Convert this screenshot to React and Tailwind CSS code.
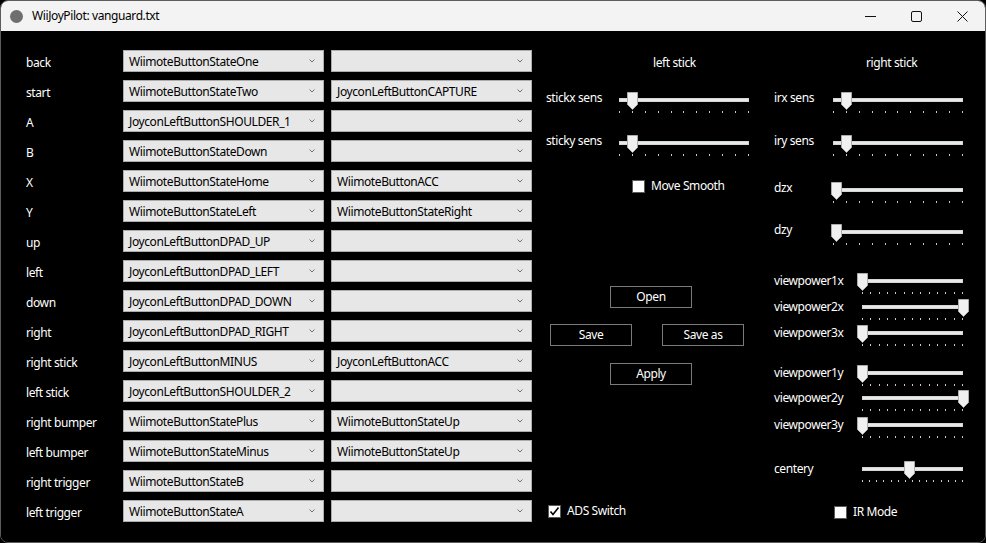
import React from 'react'

const FONT = "font-['Noto_Sans',sans-serif] tracking-[-0.4px]"

const mappings = [
  ['back', 'WiimoteButtonStateOne', ''],
  ['start', 'WiimoteButtonStateTwo', 'JoyconLeftButtonCAPTURE'],
  ['A', 'JoyconLeftButtonSHOULDER_1', ''],
  ['B', 'WiimoteButtonStateDown', ''],
  ['X', 'WiimoteButtonStateHome', 'WiimoteButtonACC'],
  ['Y', 'WiimoteButtonStateLeft', 'WiimoteButtonStateRight'],
  ['up', 'JoyconLeftButtonDPAD_UP', ''],
  ['left', 'JoyconLeftButtonDPAD_LEFT', ''],
  ['down', 'JoyconLeftButtonDPAD_DOWN', ''],
  ['right', 'JoyconLeftButtonDPAD_RIGHT', ''],
  ['right stick', 'JoyconLeftButtonMINUS', 'JoyconLeftButtonACC'],
  ['left stick', 'JoyconLeftButtonSHOULDER_2', ''],
  ['right bumper', 'WiimoteButtonStatePlus', 'WiimoteButtonStateUp'],
  ['left bumper', 'WiimoteButtonStateMinus', 'WiimoteButtonStateUp'],
  ['right trigger', 'WiimoteButtonStateB', ''],
  ['left trigger', 'WiimoteButtonStateA', ''],
]

function Combo({ value }) {
  return (
    <div className="h-[22px] w-[201px] border border-[#acacac] bg-[#e7e7e7] flex items-center pl-[5px] pr-[8px]">
      <span className="flex-1 text-[12px] text-black leading-none whitespace-nowrap pt-[1px]">{value}</span>
      <svg width="6" height="4" viewBox="0 0 6 4" className="shrink-0">
        <path d="M0.5 0.5 L3 3 L5.5 0.5" fill="none" stroke="#707070" strokeWidth="1" />
      </svg>
    </div>
  )
}

function Slider({ width, value, ticks }) {
  return (
    <div className="relative h-[24px]" style={{ width }}>
      <div className="absolute left-0 right-0 top-[8px] h-[4px] bg-[#e7eaea] border border-[#d6d6d6]" />
      <svg
        className="absolute top-[2px]"
        style={{ left: value * width - 5.5 }}
        width="11"
        height="18"
        viewBox="0 0 11 18"
      >
        <path d="M0.5 0.5 H10.5 V12.5 L5.5 17.5 L0.5 12.5 Z" fill="#f0f0f0" stroke="#acacac" />
      </svg>
      <div className="absolute left-0 right-0 top-[21px] flex justify-between">
        {Array.from({ length: ticks }).map((_, i) => (
          <div key={i} className="w-px h-[2px] bg-[#c8c8c8]" />
        ))}
      </div>
    </div>
  )
}

function SliderRow({ label, labelWidth, width, value, ticks, mt, labelTop = 0 }) {
  return (
    <div className="flex items-start" style={{ marginTop: mt }}>
      <div className="text-[12px] leading-4 text-white" style={{ width: labelWidth, paddingTop: labelTop }}>
        {label}
      </div>
      <Slider width={width} value={value} ticks={ticks} />
    </div>
  )
}

function CheckBox({ label, checked, className = '' }) {
  return (
    <div className={`flex items-center gap-[6px] h-4 ${className}`}>
      <div className="w-[13px] h-[13px] bg-white border border-[#5a5a5a] flex items-center justify-center">
        {checked && (
          <svg width="11" height="11" viewBox="0 0 11 11">
            <path d="M1.5 5.5 L4 8.5 L9.5 1.5" fill="none" stroke="#000" strokeWidth="1.6" />
          </svg>
        )}
      </div>
      <span className="text-[12px] text-white leading-4">{label}</span>
    </div>
  )
}

function Button({ children }) {
  return (
    <div className="w-[82px] h-[22px] border border-[#7a7a7a] bg-black text-white text-[12px] flex items-center justify-center">
      {children}
    </div>
  )
}

export default function App() {
  return (
    <div className={`w-[986px] h-[543px] bg-black ${FONT}`}>
      <div className="h-full flex flex-col border border-[#5c5c5c] rounded-[8px] overflow-hidden">
        {/* Title bar */}
        <div className="h-[30px] bg-[#f3f3f3] flex items-center shrink-0">
          <div className="ml-[9px] w-[13px] h-[13px] rounded-full bg-[#6e6e6e]" />
          <span className="ml-[9px] text-[12px] text-black">WiiJoyPilot: vanguard.txt</span>
          <div className="ml-auto flex items-center">
            <div className="w-[46px] h-[30px] flex items-center justify-center">
              <svg width="11" height="11" viewBox="0 0 11 11">
                <path d="M0 5.5 H11" stroke="#111" strokeWidth="1" />
              </svg>
            </div>
            <div className="w-[46px] h-[30px] flex items-center justify-center">
              <svg width="11" height="11" viewBox="0 0 11 11">
                <rect x="0.5" y="0.5" width="10" height="10" rx="1.5" fill="none" stroke="#111" strokeWidth="1" />
              </svg>
            </div>
            <div className="w-[46px] h-[30px] flex items-center justify-center">
              <svg width="11" height="11" viewBox="0 0 11 11">
                <path d="M0.5 0.5 L10.5 10.5 M10.5 0.5 L0.5 10.5" stroke="#111" strokeWidth="1" />
              </svg>
            </div>
          </div>
        </div>

        {/* Content */}
        <div className="flex-1 bg-black flex">
          {/* Button mapping */}
          <div className="w-[531px] pl-[25px] pt-[19px] flex flex-col gap-[8px]">
            {mappings.map(([label, a, b]) => (
              <div key={label} className="flex items-center h-[22px]">
                <div className="w-[97px] text-[12px] text-white pt-[4px]">{label}</div>
                <Combo value={a} />
                <div className="w-[7px]" />
                <Combo value={b} />
              </div>
            ))}
          </div>

          {/* Left stick */}
          <div className="w-[228px] pt-[24px] flex flex-col">
            <div className="pl-[121px] text-[12px] leading-4 text-white">left stick</div>
            <div className="pl-[14px]">
              <SliderRow label="stickx sens" labelWidth={73} width={130} value={0.1} ticks={11} mt={19} />
              <SliderRow label="sticky sens" labelWidth={73} width={130} value={0.1} ticks={11} mt={19} />
            </div>
            <CheckBox label="Move Smooth" checked={false} className="ml-[100px] mt-[21px]" />
            <div className="ml-[78px] mt-[92px]">
              <Button>Open</Button>
            </div>
            <div className="ml-[18px] mt-[16px] flex gap-[30px]">
              <Button>Save</Button>
              <Button>Save as</Button>
            </div>
            <div className="ml-[78px] mt-[17px]">
              <Button>Apply</Button>
            </div>
            <CheckBox label="ADS Switch" checked className="ml-[16px] mt-[118px]" />
          </div>

          {/* Right stick */}
          <div className="flex-1 pt-[24px] flex flex-col pl-[14px]">
            <div className="pl-[92px] text-[12px] leading-4 text-white">right stick</div>
            <SliderRow label="irx sens" labelWidth={59} width={130} value={0.1} ticks={11} mt={19} />
            <SliderRow label="iry sens" labelWidth={59} width={130} value={0.1} ticks={11} mt={19} />
            <SliderRow label="dzx" labelWidth={59} width={130} value={0.03} ticks={11} mt={23} />
            <SliderRow label="dzy" labelWidth={59} width={130} value={0.03} ticks={11} mt={18} />
            <SliderRow label="viewpower1x" labelWidth={88} width={101} value={0} ticks={13} mt={25} labelTop={2} />
            <SliderRow label="viewpower2x" labelWidth={88} width={101} value={1} ticks={13} mt={2} labelTop={2} />
            <SliderRow label="viewpower3x" labelWidth={88} width={101} value={0} ticks={13} mt={2} labelTop={2} />
            <SliderRow label="viewpower1y" labelWidth={88} width={101} value={0} ticks={13} mt={16} labelTop={2} />
            <SliderRow label="viewpower2y" labelWidth={88} width={101} value={1} ticks={13} mt={1} labelTop={2} />
            <SliderRow label="viewpower3y" labelWidth={88} width={101} value={0} ticks={13} mt={3} labelTop={2} />
            <SliderRow label="centery" labelWidth={88} width={101} value={0.47} ticks={15} mt={20} labelTop={2} />
            <CheckBox label="IR Mode" checked={false} className="ml-[60px] mt-[21px]" />
          </div>
        </div>
      </div>
    </div>
  )
}
